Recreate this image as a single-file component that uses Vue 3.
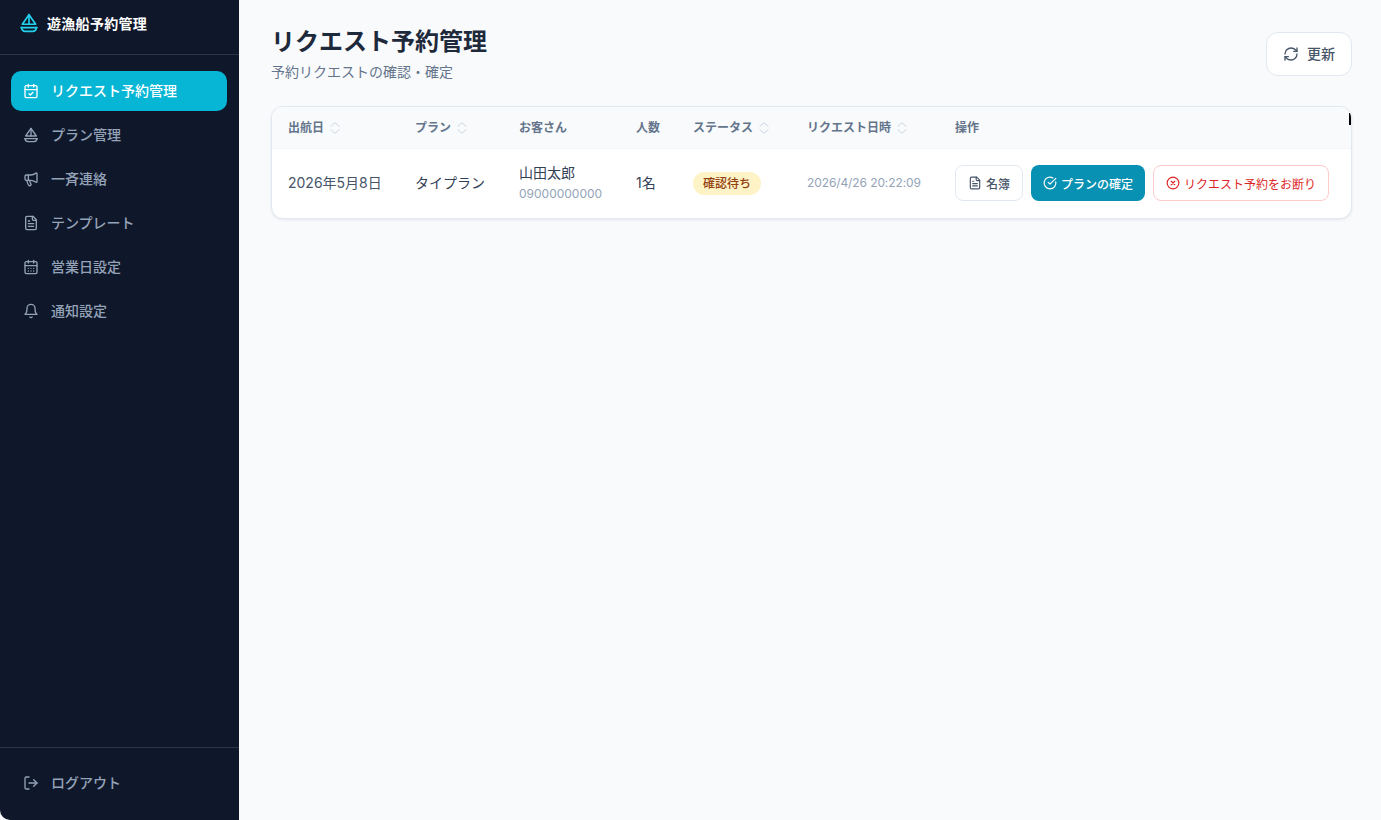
<script setup>
const navItems = [
  { label: 'リクエスト予約管理', icon: 'calendar-check', active: true },
  { label: 'プラン管理', icon: 'boat' },
  { label: '一斉連絡', icon: 'megaphone' },
  { label: 'テンプレート', icon: 'file' },
  { label: '営業日設定', icon: 'calendar-days' },
  { label: '通知設定', icon: 'bell' }
]

const columns = [
  { label: '出航日', sort: true, cls: 'col-date' },
  { label: 'プラン', sort: true, cls: 'col-plan' },
  { label: 'お客さん', cls: 'col-guest' },
  { label: '人数', cls: 'col-count' },
  { label: 'ステータス', sort: true, cls: 'col-status' },
  { label: 'リクエスト日時', sort: true, cls: 'col-requested' },
  { label: '操作', cls: 'col-actions' }
]
</script>

<template>
  <div class="app">
    <aside class="sidebar">
      <div class="brand">
        <svg class="brand-icon" viewBox="0 0 24 24" fill="none" stroke="currentColor" stroke-width="2" stroke-linecap="round" stroke-linejoin="round">
          <path d="M12 2v11.5" />
          <path d="M12 2 4 13.5h16L12 2z" />
          <path d="M2.5 17.5h19" />
          <path d="M3 17.5c.4 2.8 2 4.5 4.5 4.5h9c2.5 0 4.100-1.700 4.500-4.500" />
        </svg>
        <span>遊漁船予約管理</span>
      </div>

      <nav class="nav">
        <a v-for="item in navItems" :key="item.label" class="nav-item" :class="{ active: item.active }">
          <svg class="nav-icon" viewBox="0 0 24 24" fill="none" stroke="currentColor" stroke-width="2" stroke-linecap="round" stroke-linejoin="round">
            <template v-if="item.icon == 'calendar-check'">
              <path d="M8 2v4M16 2v4" />
              <rect x="3" y="4" width="18" height="18" rx="2" />
              <path d="M3 10h18" />
              <path d="m9 16 2 2 4-4" />
            </template>
            <template v-else-if="item.icon == 'boat'">
              <path d="M12 2v11.5" />
              <path d="M12 2 4 13.5h16L12 2z" />
              <path d="M2.5 17.5h19" />
              <path d="M3 17.5c.4 2.8 2 4.5 4.500 4.500h9c2.500 0 4.100-1.700 4.500-4.500" />
            </template>
            <template v-else-if="item.icon == 'megaphone'">
              <path d="M11 6a13 13 0 0 0 8.400-2.800A1 1 0 0 1 21 4v12a1 1 0 0 1-1.600.8A13 13 0 0 0 11 14H5a2 2 0 0 1-2-2V8a2 2 0 0 1 2-2z" />
              <path d="M6 14a12 12 0 0 0 2.400 7.200 2 2 0 0 0 3.200-2.400A8 8 0 0 1 10 14" />
              <path d="M8 6v8" />
            </template>
            <template v-else-if="item.icon == 'file'">
              <path d="M15 2H6a2 2 0 0 0-2 2v16a2 2 0 0 0 2 2h12a2 2 0 0 0 2-2V7l-5-5z" />
              <path d="M14 2v4a2 2 0 0 0 2 2h4" />
              <path d="M10 9H8M16 13H8M16 17H8" />
            </template>
            <template v-else-if="item.icon == 'calendar-days'">
              <path d="M8 2v4M16 2v4" />
              <rect x="3" y="4" width="18" height="18" rx="2" />
              <path d="M3 10h18" />
              <path d="M8 14h.01M12 14h.01M16 14h.01M8 18h.01M12 18h.01M16 18h.01" />
            </template>
            <template v-else>
              <path d="M6 8a6 6 0 0 1 12 0c0 7 3 9 3 9H3s3-2 3-9" />
              <path d="M10.300 21a1.940 1.940 0 0 0 3.400 0" />
            </template>
          </svg>
          <span class="nav-label">{{ item.label }}</span>
        </a>
      </nav>

      <div class="sidebar-foot">
        <a class="nav-item">
          <svg class="nav-icon" viewBox="0 0 24 24" fill="none" stroke="currentColor" stroke-width="2" stroke-linecap="round" stroke-linejoin="round">
            <path d="M9 21H5a2 2 0 0 1-2-2V5a2 2 0 0 1 2-2h4" />
            <path d="m16 17 5-5-5-5" />
            <path d="M21 12H9" />
          </svg>
          <span class="nav-label">ログアウト</span>
        </a>
      </div>
    </aside>

    <main class="main">
      <header class="page-head">
        <div>
          <h1>リクエスト予約管理</h1>
          <p>予約リクエストの確認・確定</p>
        </div>
        <button class="refresh">
          <svg viewBox="0 0 24 24" fill="none" stroke="currentColor" stroke-width="2" stroke-linecap="round" stroke-linejoin="round">
            <path d="M3 12a9 9 0 0 1 9-9 9.750 9.750 0 0 1 6.740 2.740L21 8" />
            <path d="M21 3v5h-5" />
            <path d="M21 12a9 9 0 0 1-9 9 9.750 9.750 0 0 1-6.740-2.740L3 16" />
            <path d="M8 16H3v5" />
          </svg>
          <span class="refresh-label">更新</span>
        </button>
      </header>

      <div class="table-card">
        <i class="edge-mark"></i>
        <table>
          <thead>
            <tr>
              <th v-for="col in columns" :key="col.label" :class="col.cls">
                <span class="th-inner">
                  <span class="th-label">{{ col.label }}</span>
                  <svg v-if="col.sort" class="sort" viewBox="0 0 24 24" fill="none" stroke="currentColor" stroke-width="2" stroke-linecap="round" stroke-linejoin="round">
                    <path d="m5 15 7 6 7-6" />
                    <path d="m5 9 7-6 7 6" />
                  </svg>
                </span>
              </th>
            </tr>
          </thead>
          <tbody>
            <tr>
              <td class="cell-date">2026年5月8日</td>
              <td class="cell-plan">タイプラン</td>
              <td>
                <div class="guest-name">山田太郎</div>
                <div class="guest-tel">09000000000</div>
              </td>
              <td class="cell-plan">1名</td>
              <td><span class="badge">確認待ち</span></td>
              <td class="cell-requested">2026/4/26 20:22:09</td>
              <td>
                <div class="actions">
                  <button class="btn btn-plain">
                    <svg viewBox="0 0 24 24" fill="none" stroke="currentColor" stroke-width="2" stroke-linecap="round" stroke-linejoin="round">
                      <path d="M15 2H6a2 2 0 0 0-2 2v16a2 2 0 0 0 2 2h12a2 2 0 0 0 2-2V7l-5-5z" />
                      <path d="M14 2v4a2 2 0 0 0 2 2h4" />
                      <path d="M10 9H8M16 13H8M16 17H8" />
                    </svg>
                    名簿
                  </button>
                  <button class="btn btn-primary">
                    <svg viewBox="0 0 24 24" fill="none" stroke="currentColor" stroke-width="2" stroke-linecap="round" stroke-linejoin="round">
                      <path d="M21.800 10A10 10 0 1 1 17 3.300" />
                      <path d="m9 11 3 3L22 4" />
                    </svg>
                    プランの確定
                  </button>
                  <button class="btn btn-danger">
                    <svg viewBox="0 0 24 24" fill="none" stroke="currentColor" stroke-width="2" stroke-linecap="round" stroke-linejoin="round">
                      <circle cx="12" cy="12" r="10" />
                      <path d="m15 9-6 6M9 9l6 6" />
                    </svg>
                    リクエスト予約をお断り
                  </button>
                </div>
              </td>
            </tr>
          </tbody>
        </table>
      </div>
    </main>
  </div>
</template>

<style>
html, body {
  margin: 0;
  background: #f8fafc;
}
</style>

<style scoped>
.app {
  display: flex;
  min-height: 820px;
  font-family: Inter, "Noto Sans CJK JP", sans-serif;
  color: #1e293b;
  background: #f8fafc;
}

.sidebar {
  width: 239px;
  flex-shrink: 0;
  height: 820px;
  display: flex;
  flex-direction: column;
  background: #0f172a;
  border-bottom-left-radius: 10px;
}

.brand {
  height: 55px;
  box-sizing: border-box;
  display: flex;
  align-items: center;
  gap: 8px;
  padding: 0 0 8px 19px;
  border-bottom: 1px solid #2a3648;
  color: #fff;
  font-size: 14px;
  font-weight: 700;
  letter-spacing: 0.3px;
}

.brand-icon {
  width: 20px;
  height: 20px;
  color: #22d3ee;
}

.nav {
  flex: 1;
  display: flex;
  flex-direction: column;
  gap: 4px;
  padding: 16px 12px 0 11px;
}

.nav-item {
  height: 40px;
  display: flex;
  align-items: center;
  gap: 12px;
  padding-left: 12px;
  border-radius: 8px;
  color: #94a3b8;
  font-size: 14px;
  font-weight: 500;
}

.nav-label {
  padding-bottom: 2px;
}

.nav-item.active {
  background: #06b6d4;
  color: #fff;
  border-radius: 10px;
}

.nav-icon {
  width: 16px;
  height: 16px;
  flex-shrink: 0;
}

.sidebar-foot {
  border-top: 1px solid #2a3648;
  padding: 15px 12px 17px 11px;
}

.main {
  flex: 1;
  padding: 26px 29px 0 32px;
  min-width: 0;
}

.page-head {
  display: flex;
  justify-content: space-between;
  align-items: flex-start;
  margin-bottom: 24px;
}

h1 {
  margin: 0;
  font-size: 24px;
  line-height: 32px;
  font-weight: 700;
  color: #1e293b;
}

.page-head p {
  margin: 4px 0 0;
  font-size: 14px;
  line-height: 20px;
  color: #64748b;
}

.refresh {
  margin-top: 6px;
  height: 44px;
  width: 86px;
  display: flex;
  align-items: center;
  justify-content: center;
  gap: 8px;
  border: 1px solid #e2e8f0;
  border-radius: 12px;
  background: #fff;
  color: #475569;
  font: 500 14px Inter, "Noto Sans CJK JP", sans-serif;
}

.refresh svg {
  width: 16px;
  height: 16px;
}

.refresh-label {
  padding-bottom: 2px;
}

.table-card {
  position: relative;
  border: 1px solid #e2e8f0;
  border-radius: 12px;
  background: #fff;
  box-shadow: 0 1px 3px rgba(15, 23, 42, 0.08);
  overflow: hidden;
}

.edge-mark {
  position: absolute;
  top: 6px;
  right: 0;
  width: 2px;
  height: 12px;
  background: #000;
}

table {
  width: 100%;
  table-layout: fixed;
  border-collapse: collapse;
}

th {
  box-sizing: border-box;
  height: 41px;
  padding: 0 0 0 16px;
  background: #f8fafc;
  border-bottom: 1px solid #f1f5f9;
  text-align: left;
  font-size: 12px;
  font-weight: 600;
  color: #64748b;
}

.th-inner {
  display: inline-flex;
  align-items: center;
  gap: 4px;
}

.th-label {
  padding-bottom: 2px;
}

.sort {
  width: 14px;
  height: 14px;
  margin-top: 2px;
  color: #cbd5e1;
  stroke-width: 1.7;
}

.col-date { width: 127px; }
.col-plan { width: 104px; }
.col-guest { width: 117px; }
.col-count { width: 57px; }
.col-status { width: 114px; }
.col-requested { width: 148px; }

td {
  box-sizing: border-box;
  height: 70px;
  padding: 0 0 0 16px;
  font-size: 14px;
  vertical-align: middle;
}

.cell-date {
  padding-bottom: 2px;
  color: #475569;
}

.cell-plan {
  padding-bottom: 2px;
  color: #334155;
}

.guest-name {
  font-size: 14px;
  line-height: 20px;
  color: #334155;
}

.guest-tel {
  margin-top: 2px;
  font-size: 12px;
  line-height: 18px;
  color: #94a3b8;
}

.badge {
  display: inline-block;
  vertical-align: -1px;
  padding: 0 10px;
  line-height: 23px;
  border-radius: 12px;
  background: #fef3c7;
  color: #92400e;
  font-size: 12px;
  font-weight: 500;
}

.cell-requested {
  padding-bottom: 2px;
  font-size: 12px;
  letter-spacing: -0.1px;
  color: #94a3b8;
}

.actions {
  display: flex;
  gap: 8px;
}

.btn {
  height: 36px;
  display: flex;
  align-items: center;
  gap: 4px;
  padding: 0 12px;
  box-sizing: border-box;
  border-radius: 8px;
  font: 500 12px Inter, "Noto Sans CJK JP", sans-serif;
  white-space: nowrap;
}

.btn svg {
  width: 14px;
  height: 14px;
  flex-shrink: 0;
}

.btn-plain {
  border: 1px solid #e2e8f0;
  background: #fff;
  color: #475569;
}

.btn-primary {
  border: none;
  background: #0891b2;
  color: #fff;
}

.btn-danger {
  border: 1px solid #fecaca;
  background: #fff;
  color: #dc2626;
  font-weight: 400;
}
</style>
